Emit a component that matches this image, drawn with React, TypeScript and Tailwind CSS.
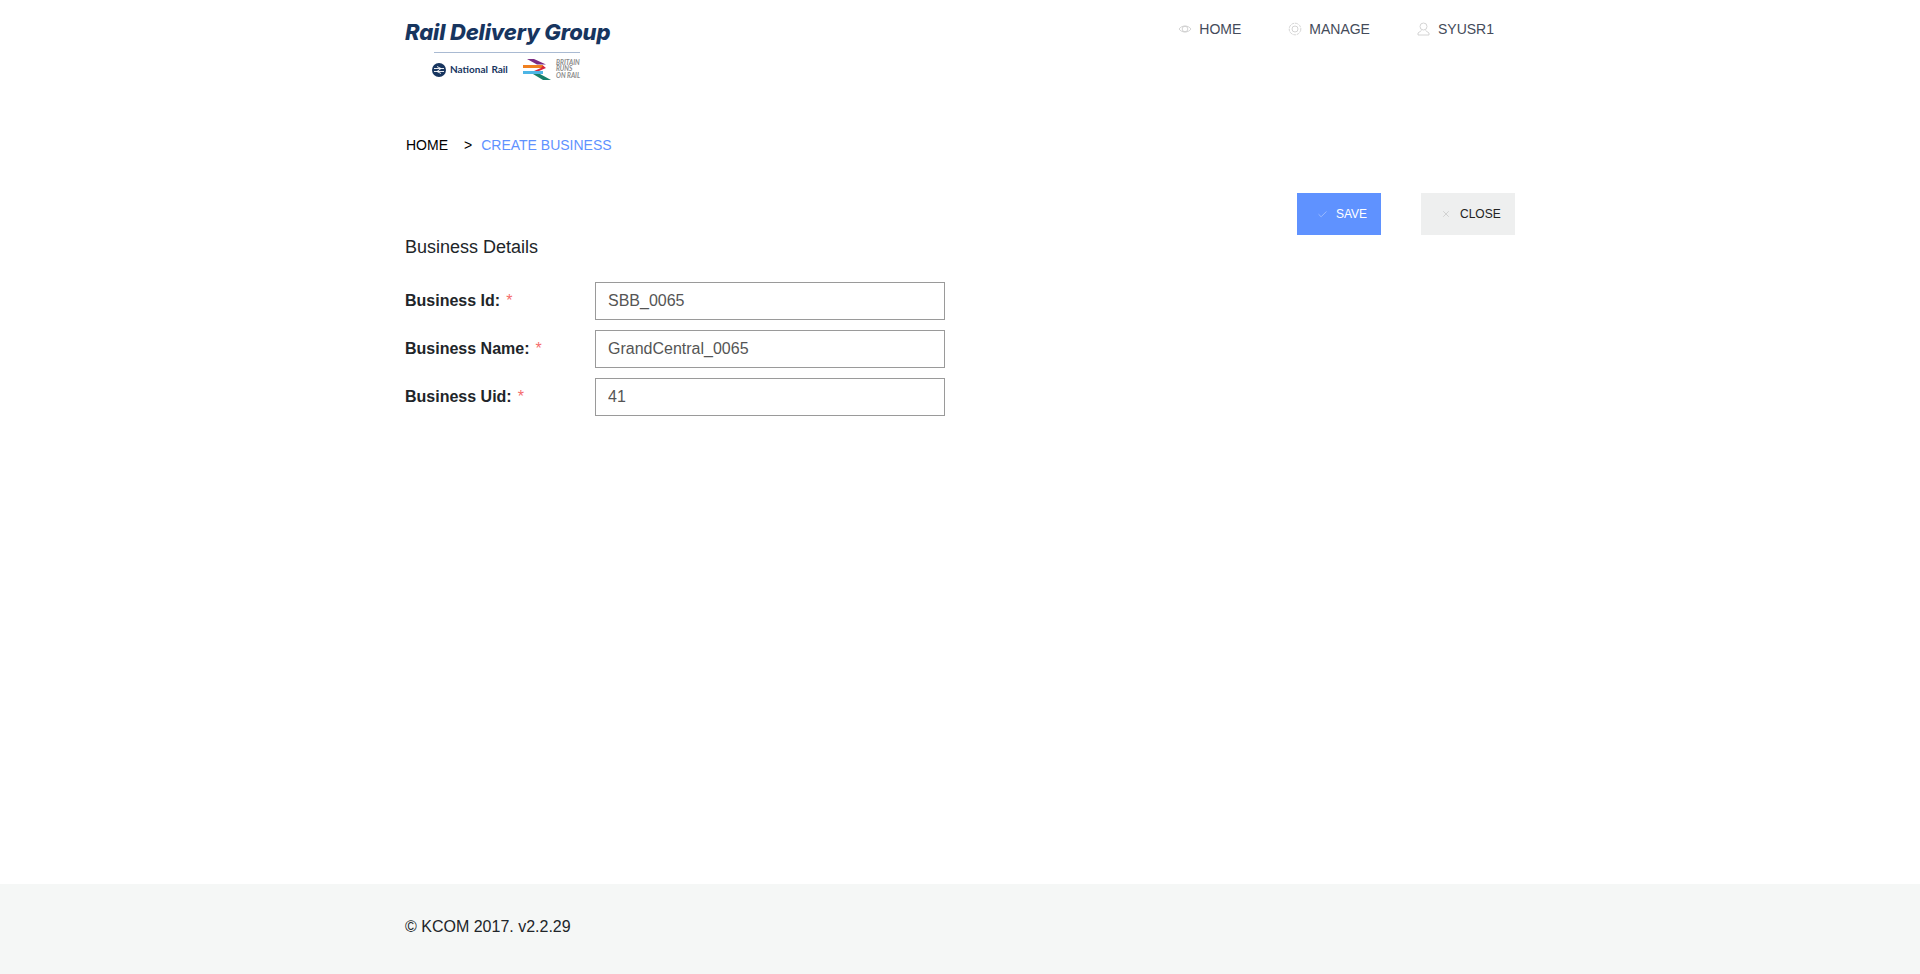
import { Check, X } from 'lucide-react';

const fields = [
  { label: 'Business Id:', value: 'SBB_0065' },
  { label: 'Business Name:', value: 'GrandCentral_0065' },
  { label: 'Business Uid:', value: '41' },
];

function Logo() {
  return (
    <div className="w-[210px]">
      <div className="font-['Inter',sans-serif] text-[22px] leading-[28px] font-extrabold italic tracking-[-0.15px] text-[#17355f] whitespace-nowrap">
        Rail Delivery Group
      </div>
      <div className="ml-[29px] mt-[6px] h-px w-[146px] bg-[#a9bad2]" />
      <div className="ml-[27px] mt-[6px] flex items-center">
        <svg width="14" height="14" viewBox="0 0 14 14">
          <circle cx="7" cy="7" r="7" fill="#17355f" />
          <path d="M2 5.500h10M2 8.500h10M5 3.500l4 2-4 3 4 2" stroke="#fff" strokeWidth="0.9" fill="none" />
        </svg>
        <span className="ml-[4px] w-[56px] font-['Lato',sans-serif] text-[10px] font-bold whitespace-nowrap text-[#17355f] [word-spacing:1px]">
          National Rail
        </span>
        <svg className="ml-[17px]" width="31" height="21" viewBox="0 0 31 21">
          <path d="M4 0h7l12 5.500H14z" fill="#7b2c83" />
          <path d="M0 6h20v3H0z" fill="#f08020" />
          <path d="M20 6.500l3 2.500-7 3H11l7-3z" fill="#d8263c" />
          <path d="M0 12h20v3H0z" fill="#4db5e5" />
          <path d="M10 15h7l11 6h-8z" fill="#16806a" />
        </svg>
        <div className="ml-[2px] font-['Lato',sans-serif] text-[6.500px] leading-[6.500px] font-bold italic text-[#8a8a8a]">
          <div>BRITAIN</div>
          <div>RUNS</div>
          <div>ON RAIL</div>
        </div>
      </div>
    </div>
  );
}

export default function App() {
  return (
    <div className="flex min-h-[974px] flex-col bg-white font-['Liberation_Sans',Arial,sans-serif]">
      <div className="mx-auto w-[1110px] flex-1">
        {/* Header */}
        <div className="flex h-[113px] items-start justify-between pt-[18px]">
          <Logo />
          <nav className="mr-[21px] flex gap-[47px] pt-[3px] text-sm leading-[16px] text-[#444b5a]">
            <a className="flex items-center gap-[7px]">
              <svg width="14" height="14" viewBox="0 0 14 14" fill="none" stroke="#c9c9c9" strokeWidth="0.8">
                <path d="M1 7c1.5-2 3.500-3 6-3s4.500 1 6 3c-1.500 2-3.500 3-6 3s-4.500-1-6-3z" />
                <circle cx="7" cy="7" r="2.800" />
              </svg>
              HOME
            </a>
            <a className="flex items-center gap-[7px]">
              <svg width="14" height="14" viewBox="0 0 14 14" fill="none" stroke="#c9c9c9" strokeWidth="0.8">
                <circle cx="7" cy="7" r="5.800" strokeDasharray="3 0.8" />
                <circle cx="7" cy="7" r="3" />
              </svg>
              MANAGE
            </a>
            <a className="flex items-center gap-[8px]">
              <svg width="13" height="14" viewBox="0 0 13 14" fill="none" stroke="#c9c9c9" strokeWidth="0.8">
                <circle cx="6.500" cy="4.500" r="3.500" />
                <path d="M4.500 8.500 1 11v2h11v-2L8.500 8.500" />
              </svg>
              SYUSR1
            </a>
          </nav>
        </div>

        {/* Breadcrumb */}
        <div className="flex h-[80px] items-start pt-[24px] pl-[1px] text-sm leading-[16px]">
          <span className="text-black">HOME</span>
          <span className="ml-[16px] text-black">&gt;</span>
          <span className="ml-[9px] text-[#5f92ff]">CREATE BUSINESS</span>
        </div>

        {/* Actions */}
        <div className="flex h-[42px] justify-end text-xs">
          <button className="flex w-[84px] items-center bg-[#5f92ff] pl-[20px] text-white">
            <Check size={11} strokeWidth={1} className="mr-[8px] text-[#dbe7ff]" />
            SAVE
          </button>
          <button className="ml-[40px] flex w-[94px] items-center bg-[#eeefef] pl-[20px] text-[#222]">
            <X size={10} strokeWidth={1} className="mr-[9px] text-[#a8a8a8]" />
            CLOSE
          </button>
        </div>

        {/* Form */}
        <h2 className="text-[18px] leading-[24px] text-[#212529]">Business Details</h2>
        <div className="mt-[23px] flex flex-col gap-[10px]">
          {fields.map((field) => (
            <div key={field.label} className="flex items-center">
              <label className="w-[190px] text-[16px] font-bold text-[#212529]">
                {field.label}
                <span className="ml-[6px] font-normal text-[#f56c6c]">*</span>
              </label>
              <input
                readOnly
                value={field.value}
                className="h-[38px] w-[350px] border border-[#9a9a9a] px-[12px] text-[16px] text-[#555]"
              />
            </div>
          ))}
        </div>
      </div>

      {/* Footer */}
      <footer className="h-[90px] bg-[#f5f7f6]">
        <div className="mx-auto w-[1110px] pt-[31px] text-[16px] leading-[24px] text-[#212529]">
          © KCOM 2017. v2.2.29
        </div>
      </footer>
    </div>
  );
}
